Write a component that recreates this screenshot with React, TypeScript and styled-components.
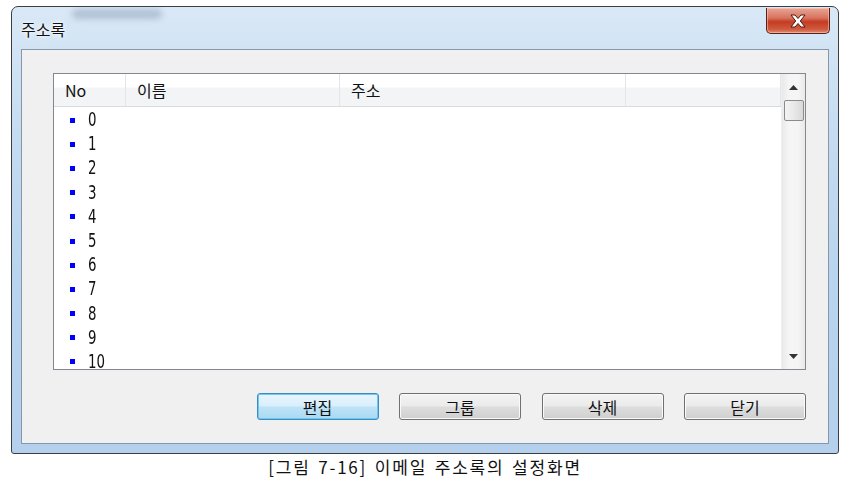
import styled, { createGlobalStyle } from 'styled-components';

const GlobalStyle = createGlobalStyle`
  html, body { margin: 0; padding: 0; background: #ffffff; }
  body { font-family: "Noto Sans CJK KR", "Noto Sans", sans-serif; }
`;

const Page = styled.div`
  width: 849px;
  height: 479px;
  padding: 6px 0 0 11px;
  box-sizing: border-box;
  display: flex;
  flex-direction: column;
`;

const Frame = styled.div`
  width: 828px;
  height: 449px;
  box-sizing: border-box;
  border: 1px solid #3b3f45;
  border-radius: 7px 7px 3px 3px;
  background: linear-gradient(180deg, #d9e8f6 0%, #c4dbf0 30%, #b9d4ee 60%, #b4d0ec 100%);
  display: flex;
  flex-direction: column;
  padding: 0 9px 9px 9px;
  position: relative;
  overflow: hidden;
`;

const Smudge = styled.div`
  position: absolute;
  top: 2px;
  left: 60px;
  width: 90px;
  height: 10px;
  border-radius: 6px;
  background: rgba(60, 80, 110, 0.25);
  filter: blur(3px);
`;

const TitleBar = styled.div`
  height: 42px;
  display: flex;
  align-items: center;
  justify-content: space-between;
`;

const Title = styled.div`
  font-size: 16px;
  color: #111;
  padding-top: 2px;
  text-shadow: 0 0 6px #ffffff, 0 0 3px #ffffff;
`;

const CloseButton = styled.div`
  align-self: flex-start;
  width: 64px;
  height: 26px;
  margin-top: 1px;
  margin-right: -1px;
  box-sizing: border-box;
  border: 1px solid #5b1f16;
  border-top: none;
  border-radius: 0 0 5px 5px;
  background: linear-gradient(180deg, #e9a696 0%, #d7735e 40%, #c53b22 55%, #cf5a3e 85%, #e08c72 100%);
  box-shadow: inset 0 0 0 1px rgba(255, 210, 200, 0.5);
  display: flex;
  align-items: center;
  justify-content: center;
`;

const Client = styled.div`
  flex: 1;
  background: #f0f0f0;
  border: 1px solid #8497ad;
  display: flex;
  flex-direction: column;
  padding: 23px 22px 0 31px;
`;

const ListView = styled.div`
  height: 297px;
  box-sizing: border-box;
  border: 1px solid #828790;
  background: #ffffff;
  display: flex;
`;

const ListBody = styled.div`
  flex: 1;
  display: flex;
  flex-direction: column;
  overflow: hidden;
`;

const Header = styled.div`
  height: 32px;
  flex-shrink: 0;
  display: flex;
  background: linear-gradient(180deg, #ffffff 0%, #ffffff 40%, #f3f4f6 45%, #f3f4f6 100%);
  border-bottom: 1px solid #d8dbe0;
`;

const HeaderCell = styled.div<{ $w: number }>`
  width: ${(p) => p.$w}px;
  flex-shrink: 0;
  box-sizing: border-box;
  border-right: 1px solid #e3e5e8;
  display: flex;
  align-items: center;
  padding-left: 11px;
  font-size: 16px;
  color: #111;
`;

const Row = styled.div`
  height: 24.2px;
  flex-shrink: 0;
  display: flex;
  align-items: center;
`;

const Bullet = styled.span`
  width: 5px;
  height: 5px;
  background: #0000ff;
  margin-left: 16px;
  margin-right: 13px;
  margin-top: 2px;
`;

const Num = styled.span`
  font-family: "DejaVu Sans Condensed", "Liberation Sans Narrow", "Liberation Sans", sans-serif;
  font-size: 19px;
  color: #111;
  display: inline-block;
  transform: scaleX(0.78);
  transform-origin: left center;
`;

const ScrollBar = styled.div`
  width: 23px;
  flex-shrink: 0;
  background: linear-gradient(90deg, #e9e9e9 0%, #f5f5f5 30%, #f5f5f5 70%, #e9e9e9 100%);
  border-left: 1px solid #eeeeee;
  display: flex;
  flex-direction: column;
  align-items: center;
`;

const ArrowBox = styled.div`
  height: 26px;
  width: 100%;
  display: flex;
  align-items: center;
  justify-content: center;
`;

const Thumb = styled.div`
  width: 20px;
  height: 21px;
  box-sizing: border-box;
  border: 1px solid #8b8b8b;
  border-radius: 2px;
  background: linear-gradient(90deg, #f3f3f3 0%, #e8e8e8 50%, #d8d8d8 100%);
`;

const Track = styled.div`
  flex: 1;
`;

const ButtonRow = styled.div`
  display: flex;
  justify-content: flex-end;
  gap: 20.5px;
  margin-top: 23px;
`;

const Button = styled.div<{ $default?: boolean }>`
  width: 122px;
  height: 27px;
  box-sizing: border-box;
  border: 1px solid ${(p) => (p.$default ? '#3c8dc0' : '#707070')};
  border-radius: 3px;
  background: ${(p) =>
    p.$default
      ? 'linear-gradient(180deg, #e8f5fd 0%, #d9eefb 48%, #bee3f7 52%, #a9d9f3 100%)'
      : 'linear-gradient(180deg, #f3f3f3 0%, #ebebeb 48%, #dddddd 52%, #cfcfcf 100%)'};
  box-shadow: ${(p) => (p.$default ? 'inset 0 0 0 1px #6fc6ee' : 'inset 0 0 0 1px #fafafa')};
  display: flex;
  align-items: center;
  justify-content: center;
  font-size: 16px;
  color: #111;
`;

const Caption = styled.div`
  width: 828px;
  text-align: center;
  margin-top: 0px;
  font-size: 17px;
  letter-spacing: 1.8px;
  word-spacing: 2px;
  color: #111;
`;

const rows = Array.from({ length: 11 }, (_, i) => i);

const CloseGlyph = () => (
  <svg width="20" height="14" viewBox="0 0 20 14">
    <path
      d="M3 1 L7 1 L10 4.5 L13 1 L17 1 L12.3 7 L17 13 L13 13 L10 9.5 L7 13 L3 13 L7.7 7 Z"
      fill="#ffffff"
      stroke="#4a1a12"
      strokeWidth="1"
      strokeLinejoin="round"
    />
  </svg>
);

const UpArrow = () => (
  <svg width="9" height="5" viewBox="0 0 9 5">
    <path d="M0 5 L4.5 0 L9 5 Z" fill="#333" />
  </svg>
);

const DownArrow = () => (
  <svg width="9" height="5" viewBox="0 0 9 5">
    <path d="M0 0 L9 0 L4.5 5 Z" fill="#333" />
  </svg>
);

export default function App() {
  return (
    <>
      <GlobalStyle />
      <Page>
        <Frame>
          <Smudge />
          <TitleBar>
            <Title>주소록</Title>
            <CloseButton>
              <CloseGlyph />
            </CloseButton>
          </TitleBar>
          <Client>
            <ListView>
              <ListBody>
                <Header>
                  <HeaderCell $w={72}>No</HeaderCell>
                  <HeaderCell $w={214}>이름</HeaderCell>
                  <HeaderCell $w={286}>주소</HeaderCell>
                  <HeaderCell $w={155} />
                </Header>
                {rows.map((n) => (
                  <Row key={n}>
                    <Bullet />
                    <Num>{n}</Num>
                  </Row>
                ))}
              </ListBody>
              <ScrollBar>
                <ArrowBox>
                  <UpArrow />
                </ArrowBox>
                <Thumb />
                <Track />
                <ArrowBox>
                  <DownArrow />
                </ArrowBox>
              </ScrollBar>
            </ListView>
            <ButtonRow>
              <Button $default>편집</Button>
              <Button>그룹</Button>
              <Button>삭제</Button>
              <Button>닫기</Button>
            </ButtonRow>
          </Client>
        </Frame>
        <Caption>[그림 7-16] 이메일 주소록의 설정화면</Caption>
      </Page>
    </>
  );
}
